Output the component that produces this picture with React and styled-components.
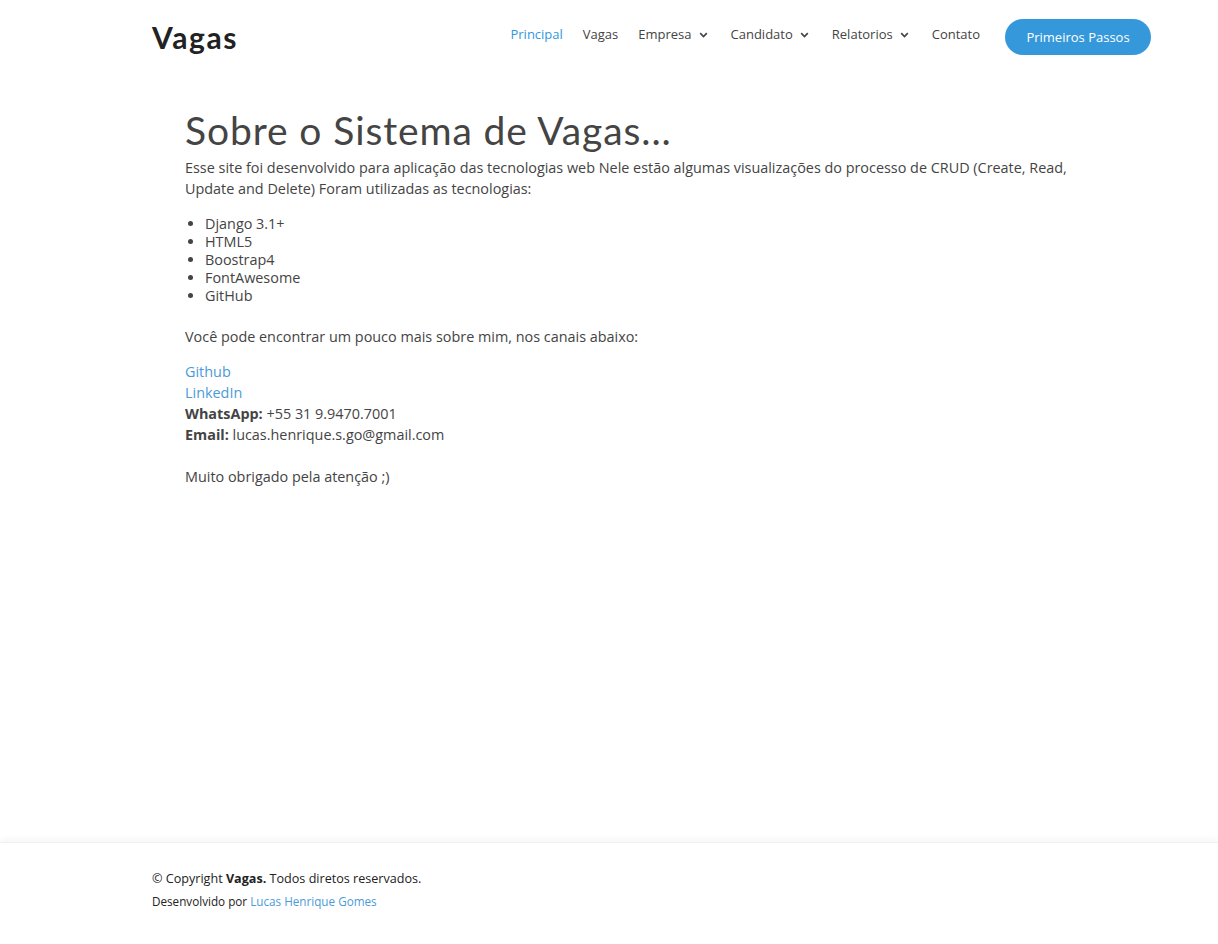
import React from 'react'
import styled, { createGlobalStyle } from 'styled-components';

const GlobalStyle = createGlobalStyle`
  html, body { margin: 0; padding: 0; background: #fff; }
  body {
    font-family: "Open Sans", "Liberation Sans", sans-serif;
    color: #444;
    font-size: 14.4px;
  }
`

const Page = styled.div`
  min-height: 944px;
  display: flex;
  flex-direction: column;
`
const Header = styled.header`
  height: 72px;
  display: flex;
  align-items: center;
  justify-content: space-between;
  padding: 0 67px 0 152px;
`
const Logo = styled.div`
  font-family: "Lato", "Open Sans", sans-serif;
  font-weight: 700;
  font-size: 30px;
  color: #222;
  letter-spacing: 1.6px;
  margin-top: 2px;
`
const Nav = styled.nav`
  display: flex;
  align-items: center;
`
const NavItem = styled.a`
  display: flex;
  align-items: center;
  gap: 7px;
  font-size: 13px;
  color: ${({active}) => active ? '#3498db' : '#444'};
  text-decoration: none;
  margin-right: ${({wide}) => wide ? '23px' : '20px'};
  margin-top: -4px;
  cursor: pointer;
`
const Chevron = () => (
  <svg width="9" height="6" viewBox="0 0 9 6" style={{marginTop: 1}}>
    <path d="M1.2 1.2l3.3 3.3 3.3-3.3" stroke="#444" strokeWidth="1.7" fill="none"/>
  </svg>
)
const Button = styled.a`
  display: flex;
  align-items: center;
  justify-content: center;
  width: 146px;
  height: 36px;
  border-radius: 18px;
  background-color: #3498db;
  color: #fff;
  font-size: 13px;
  font-weight: 500;
  margin-left: 5px;
  margin-top: 1px;
  cursor: pointer;
`
const Main = styled.main`
  flex: 1;
  padding: 35px 140px 0 185px;
`
const Title = styled.h1`
  font-family: "Lato", "Open Sans", sans-serif;
  font-weight: 400;
  font-size: 39px;
  letter-spacing: 0.9px;
  color: #444;
  margin: 0 0 4px;
  line-height: 46px;
`
const Text = styled.p`
  margin: 0 0 ${({tight}) => tight ? '16px' : '14px'};
  line-height: 21px;
`
const List = styled.ul`
  margin: 0 0 21px;
  padding-left: 20px;
  line-height: 18px;
`
const Link = styled.a`
  color: #4a9bd9;
  text-decoration: none;
`
const Footer = styled.footer`
  box-shadow: 0 -3px 6px rgba(0,0,0,0.04);
  border-top: 1px solid #f0f0f0;
  padding: 26px 152px 35px;
  color: #222;
`
const Copy = styled.div`
  font-size: 12.6px;
  line-height: 20px;
`
const Credits = styled.div`
  font-size: 11.7px;
  margin-top: 4px;
  line-height: 16px;
`

export default function App() {
  return (
    <Page>
      <GlobalStyle/>
      <Header>
        <Logo>Vagas</Logo>
        <Nav>
          <NavItem active>Principal</NavItem>
          <NavItem>Vagas</NavItem>
          <NavItem wide>Empresa <Chevron/></NavItem>
          <NavItem wide>Candidato <Chevron/></NavItem>
          <NavItem wide>Relatorios <Chevron/></NavItem>
          <NavItem>Contato</NavItem>
          <Button>Primeiros Passos</Button>
        </Nav>
      </Header>
      <Main>
        <Title>Sobre o Sistema de Vagas...</Title>
        <Text tight>
          Esse site foi desenvolvido para aplicação das tecnologias web Nele estão algumas visualizações do processo de CRUD (Create, Read, Update and Delete) Foram utilizadas as tecnologias:
        </Text>
        <List>
          <li>Django 3.1+</li>
          <li>HTML5</li>
          <li>Boostrap4</li>
          <li>FontAwesome</li>
          <li>GitHub</li>
        </List>
        <Text>Você pode encontrar um pouco mais sobre mim, nos canais abaixo:</Text>
        <Text>
          <Link>Github</Link><br/>
          <Link>LinkedIn</Link><br/>
          <b>WhatsApp:</b> +55 31 9.9470.7001<br/>
          <b>Email:</b> lucas.henrique.s.go@gmail.com<br/>
          <br/>
          Muito obrigado pela atenção ;)
        </Text>
      </Main>
      <Footer>
        <Copy>© Copyright <b>Vagas.</b> Todos diretos reservados.</Copy>
        <Credits>Desenvolvido por <Link>Lucas Henrique Gomes</Link></Credits>
      </Footer>
    </Page>
  )
}
